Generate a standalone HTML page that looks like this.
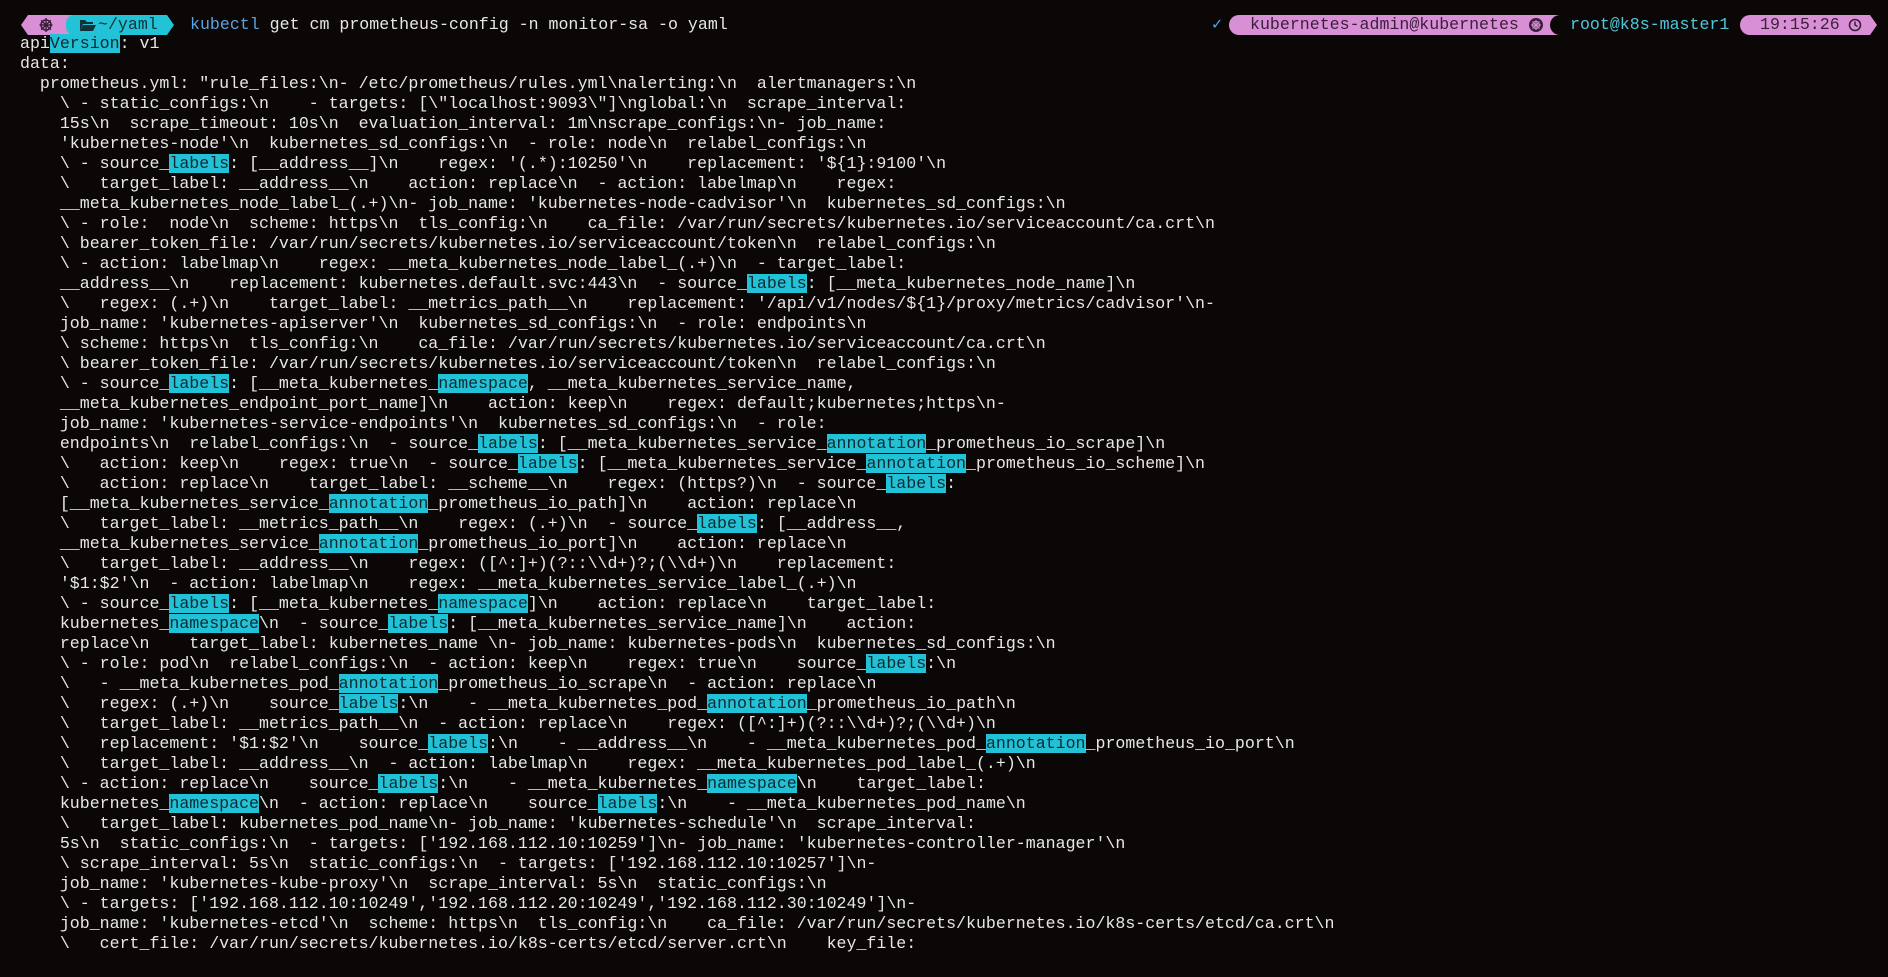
<!DOCTYPE html>
<html><head><meta charset="utf-8"><style>
html,body{margin:0;padding:0;background:#0c0707;width:1888px;height:977px;overflow:hidden}
body{font-family:"Liberation Mono","DejaVu Sans Mono",monospace;font-size:16.6px;color:#e8e6e6}
pre{position:absolute;left:20px;top:34px;margin:0;font:inherit;line-height:20px;white-space:pre}
.h{background:#22c1d6;color:#0e2a33}
.a{position:absolute;line-height:20px;white-space:pre}
.pk{position:absolute;background:#d98fd6}
.cy{position:absolute;background:#22c3d6}
</style></head><body>
<div class="pk" style="left:21px;top:15px;width:56px;height:20px;clip-path:polygon(7px 0,100% 0,100% 100%,7px 100%,0 50%)"></div>
<svg class="a" style="left:38px;top:17px" width="16" height="16" viewBox="0 0 16 16"><circle cx="8" cy="8" r="5" fill="none" stroke="#3a1f3a" stroke-width="1.6"/><g stroke="#3a1f3a" stroke-width="1.4"><path d="M8 1v14M1.5 8h13M3.2 3.2l9.6 9.6M12.8 3.2l-9.6 9.6"/></g><circle cx="8" cy="8" r="1.6" fill="#3a1f3a"/></svg>
<div class="cy" style="left:66px;top:15px;width:108px;height:20px;border-radius:8px 0 0 8px;clip-path:polygon(0 0,calc(100% - 7px) 0,100% 50%,calc(100% - 7px) 100%,0 100%)"></div>
<svg class="a" style="left:79px;top:19px" width="17" height="12" viewBox="0 0 17 12"><path d="M1 1h5l2 2h6v2H4L1 12z M4 6h13l-3 6H1z" fill="#12323a"/></svg>
<div class="a" style="left:98px;top:15px;color:#12323a">~/yaml</div>
<div class="a" style="left:190px;top:15px"><span style="color:#5aa3e3">kubectl</span> get cm prometheus-config -n monitor-sa -o yaml</div>

<div class="a" style="left:1212px;top:15px;color:#4aa8f0">✓</div>
<div class="pk" style="left:1229px;top:15px;width:332px;height:20px;border-radius:10px 0 0 10px"></div>
<div class="a" style="left:1250px;top:15px;color:#3a1f3a">kubernetes-admin@kubernetes</div>
<svg class="a" style="left:1529px;top:18px" width="14" height="14" viewBox="0 0 14 14"><circle cx="7" cy="7" r="7" fill="#3a1f3a"/><g stroke="#d98fd6" stroke-width="1"><circle cx="7" cy="7" r="3.5" fill="none"/><path d="M7 2v10M2 7h10M3.5 3.5l7 7M10.5 3.5l-7 7"/></g></svg>
<div style="position:absolute;left:1550px;top:15px;width:20px;height:20px;border-radius:50%;background:#0c0707"></div>
<div class="a" style="left:1570px;top:15px;color:#4fc8dc">root@k8s-master1</div>
<div class="pk" style="left:1740px;top:15px;width:137px;height:20px;border-radius:10px 0 0 10px;clip-path:polygon(0 0,calc(100% - 7px) 0,100% 50%,calc(100% - 7px) 100%,0 100%)"></div>
<div class="a" style="left:1760px;top:15px;color:#3a1f3a">19:15:26</div>
<svg class="a" style="left:1848px;top:18px" width="14" height="14" viewBox="0 0 14 14"><circle cx="7" cy="7" r="5.5" fill="none" stroke="#3a1f3a" stroke-width="1.6"/><path d="M7 3.5V7l2.5 1.5" fill="none" stroke="#3a1f3a" stroke-width="1.5"/></svg>

<pre>api<span class="h">Version</span>: v1
data:
  prometheus.yml: "rule_files:\n- /etc/prometheus/rules.yml\nalerting:\n  alertmanagers:\n
    \ - static_configs:\n    - targets: [\"localhost:9093\"]\nglobal:\n  scrape_interval:
    15s\n  scrape_timeout: 10s\n  evaluation_interval: 1m\nscrape_configs:\n- job_name:
    'kubernetes-node'\n  kubernetes_sd_configs:\n  - role: node\n  relabel_configs:\n
    \ - source_<span class="h">labels</span>: [__address__]\n    regex: '(.*):10250'\n    replacement: '${1}:9100'\n
    \   target_label: __address__\n    action: replace\n  - action: labelmap\n    regex:
    __meta_kubernetes_node_label_(.+)\n- job_name: 'kubernetes-node-cadvisor'\n  kubernetes_sd_configs:\n
    \ - role:  node\n  scheme: https\n  tls_config:\n    ca_file: /var/run/secrets/kubernetes.io/serviceaccount/ca.crt\n
    \ bearer_token_file: /var/run/secrets/kubernetes.io/serviceaccount/token\n  relabel_configs:\n
    \ - action: labelmap\n    regex: __meta_kubernetes_node_label_(.+)\n  - target_label:
    __address__\n    replacement: kubernetes.default.svc:443\n  - source_<span class="h">labels</span>: [__meta_kubernetes_node_name]\n
    \   regex: (.+)\n    target_label: __metrics_path__\n    replacement: '/api/v1/nodes/${1}/proxy/metrics/cadvisor'\n-
    job_name: 'kubernetes-apiserver'\n  kubernetes_sd_configs:\n  - role: endpoints\n
    \ scheme: https\n  tls_config:\n    ca_file: /var/run/secrets/kubernetes.io/serviceaccount/ca.crt\n
    \ bearer_token_file: /var/run/secrets/kubernetes.io/serviceaccount/token\n  relabel_configs:\n
    \ - source_<span class="h">labels</span>: [__meta_kubernetes_<span class="h">namespace</span>, __meta_kubernetes_service_name,
    __meta_kubernetes_endpoint_port_name]\n    action: keep\n    regex: default;kubernetes;https\n-
    job_name: 'kubernetes-service-endpoints'\n  kubernetes_sd_configs:\n  - role:
    endpoints\n  relabel_configs:\n  - source_<span class="h">labels</span>: [__meta_kubernetes_service_<span class="h">annotation</span>_prometheus_io_scrape]\n
    \   action: keep\n    regex: true\n  - source_<span class="h">labels</span>: [__meta_kubernetes_service_<span class="h">annotation</span>_prometheus_io_scheme]\n
    \   action: replace\n    target_label: __scheme__\n    regex: (https?)\n  - source_<span class="h">labels</span>:
    [__meta_kubernetes_service_<span class="h">annotation</span>_prometheus_io_path]\n    action: replace\n
    \   target_label: __metrics_path__\n    regex: (.+)\n  - source_<span class="h">labels</span>: [__address__,
    __meta_kubernetes_service_<span class="h">annotation</span>_prometheus_io_port]\n    action: replace\n
    \   target_label: __address__\n    regex: ([^:]+)(?::\\d+)?;(\\d+)\n    replacement:
    '$1:$2'\n  - action: labelmap\n    regex: __meta_kubernetes_service_label_(.+)\n
    \ - source_<span class="h">labels</span>: [__meta_kubernetes_<span class="h">namespace</span>]\n    action: replace\n    target_label:
    kubernetes_<span class="h">namespace</span>\n  - source_<span class="h">labels</span>: [__meta_kubernetes_service_name]\n    action:
    replace\n    target_label: kubernetes_name \n- job_name: kubernetes-pods\n  kubernetes_sd_configs:\n
    \ - role: pod\n  relabel_configs:\n  - action: keep\n    regex: true\n    source_<span class="h">labels</span>:\n
    \   - __meta_kubernetes_pod_<span class="h">annotation</span>_prometheus_io_scrape\n  - action: replace\n
    \   regex: (.+)\n    source_<span class="h">labels</span>:\n    - __meta_kubernetes_pod_<span class="h">annotation</span>_prometheus_io_path\n
    \   target_label: __metrics_path__\n  - action: replace\n    regex: ([^:]+)(?::\\d+)?;(\\d+)\n
    \   replacement: '$1:$2'\n    source_<span class="h">labels</span>:\n    - __address__\n    - __meta_kubernetes_pod_<span class="h">annotation</span>_prometheus_io_port\n
    \   target_label: __address__\n  - action: labelmap\n    regex: __meta_kubernetes_pod_label_(.+)\n
    \ - action: replace\n    source_<span class="h">labels</span>:\n    - __meta_kubernetes_<span class="h">namespace</span>\n    target_label:
    kubernetes_<span class="h">namespace</span>\n  - action: replace\n    source_<span class="h">labels</span>:\n    - __meta_kubernetes_pod_name\n
    \   target_label: kubernetes_pod_name\n- job_name: 'kubernetes-schedule'\n  scrape_interval:
    5s\n  static_configs:\n  - targets: ['192.168.112.10:10259']\n- job_name: 'kubernetes-controller-manager'\n
    \ scrape_interval: 5s\n  static_configs:\n  - targets: ['192.168.112.10:10257']\n-
    job_name: 'kubernetes-kube-proxy'\n  scrape_interval: 5s\n  static_configs:\n
    \ - targets: ['192.168.112.10:10249','192.168.112.20:10249','192.168.112.30:10249']\n-
    job_name: 'kubernetes-etcd'\n  scheme: https\n  tls_config:\n    ca_file: /var/run/secrets/kubernetes.io/k8s-certs/etcd/ca.crt\n
    \   cert_file: /var/run/secrets/kubernetes.io/k8s-certs/etcd/server.crt\n    key_file:</pre>
</body></html>
